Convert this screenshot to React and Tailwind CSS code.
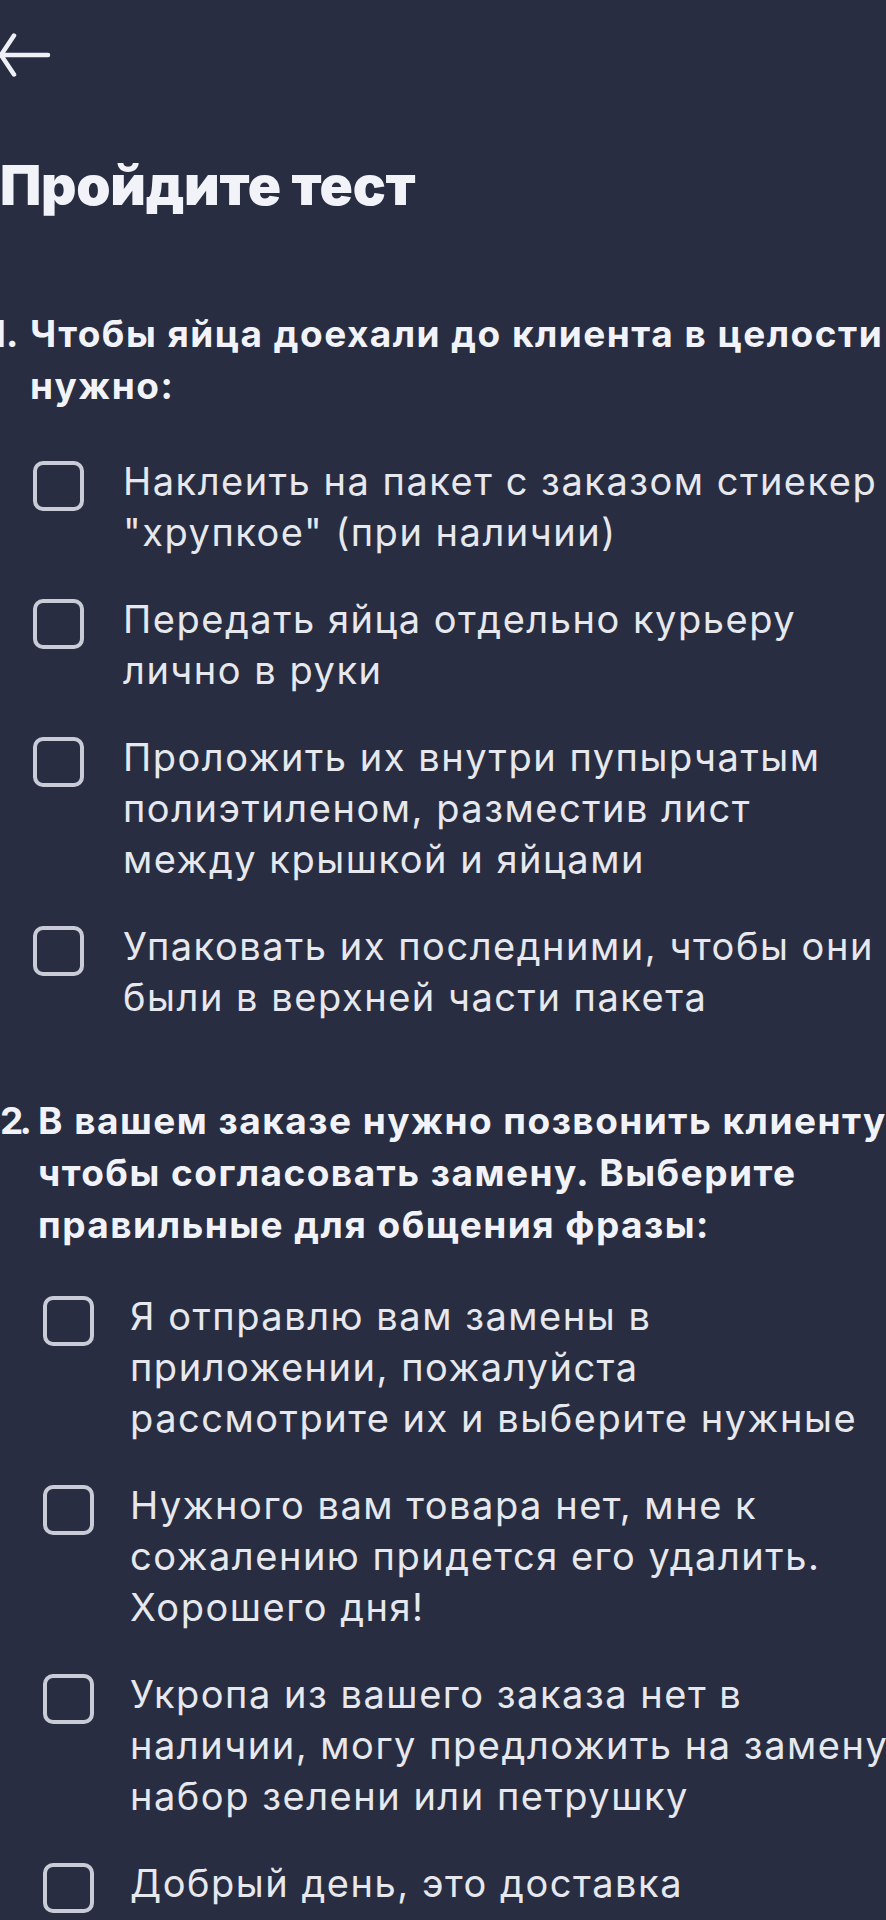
import React from "react";

const questions = [
  {
    num: "1.",
    numCol: "w-[40px] -ml-[10px] tracking-normal",
    optionsIndent: "ml-[33px]",
    optionGap: "gap-[39px]",
    optionsTop: "mt-[44px]",
    top: "mt-[91px]",
    title: ["Чтобы яйца доехали до клиента в целости", "нужно:"],
    options: [
      ["Наклеить на пакет с заказом стиекер", "\"хрупкое\" (при наличии)"],
      ["Передать яйца отдельно курьеру", "лично в руки"],
      ["Проложить их внутри пупырчатым", "полиэтиленом, разместив лист", "между крышкой и яйцами"],
      ["Упаковать их последними, чтобы они", "были в верхней части пакета"],
    ],
  },
  {
    num: "2.",
    numCol: "w-[38px] tracking-[-0.1em]",
    optionsIndent: "ml-[43px]",
    optionGap: "gap-[36px]",
    optionsTop: "mt-[40px]",
    top: "mt-[72px]",
    title: [
      "В вашем заказе нужно позвонить клиенту,",
      "чтобы согласовать замену. Выберите",
      "правильные для общения фразы:",
    ],
    options: [
      ["Я отправлю вам замены в", "приложении, пожалуйста", "рассмотрите их и выберите нужные"],
      ["Нужного вам товара нет, мне к", "сожалению придется его удалить.", "Хорошего дня!"],
      ["Укропа из вашего заказа нет в", "наличии, могу предложить на замену", "набор зелени или петрушку"],
      ["Добрый день, это доставка"],
    ],
  },
];

function Checkbox() {
  return (
    <div className="mt-[5px] h-[50px] w-[51px] shrink-0 rounded-[10px] border-[4px] border-[#c9ccd6]" />
  );
}

function Option({ lines, gap }) {
  return (
    <div className={`flex items-start ${gap}`}>
      <Checkbox />
      <div className="text-[38px] leading-[51px] tracking-[0.04em] text-[#e6e8ee]">
        {lines.map((l, i) => (
          <div key={i} className="whitespace-nowrap">
            {l}
          </div>
        ))}
      </div>
    </div>
  );
}

function Question({ q }) {
  return (
    <div className={q.top}>
      <div className="flex text-[37px] font-bold leading-[52px] tracking-[0.04em] text-[#f1f3f8]">
        <span className={`${q.numCol} shrink-0 whitespace-nowrap`}>{q.num}</span>
        <div>
          {q.title.map((l, i) => (
            <div key={i} className="whitespace-nowrap">
              {l}
            </div>
          ))}
        </div>
      </div>
      <div className={`${q.optionsTop} ${q.optionsIndent} flex flex-col gap-[36px]`}>
        {q.options.map((o, i) => (
          <Option key={i} lines={o} gap={q.optionGap} />
        ))}
      </div>
    </div>
  );
}

export default function App() {
  return (
    <div className="min-h-screen w-full overflow-hidden bg-[#282d41] font-['Inter','Noto_Sans',sans-serif]">
      {/* Back */}
      <div className="pt-[33px]">
        <svg
          width="56"
          height="44"
          viewBox="0 0 56 44"
          fill="none"
          stroke="#eef0f5"
          strokeWidth="4.5"
          strokeLinecap="round"
          strokeLinejoin="round"
          className="-ml-[4px] block"
        >
          <path d="M52 22H5" />
          <path d="M18 2.5L5 22L18 41.5" />
        </svg>
      </div>

      <h1 className="mt-[76px] whitespace-nowrap text-[55px] font-black leading-[64px] tracking-[-0.005em] text-[#f1f3f8]">
        Пройдите тест
      </h1>

      {questions.map((q, i) => (
        <Question key={i} q={q} />
      ))}
    </div>
  );
}
